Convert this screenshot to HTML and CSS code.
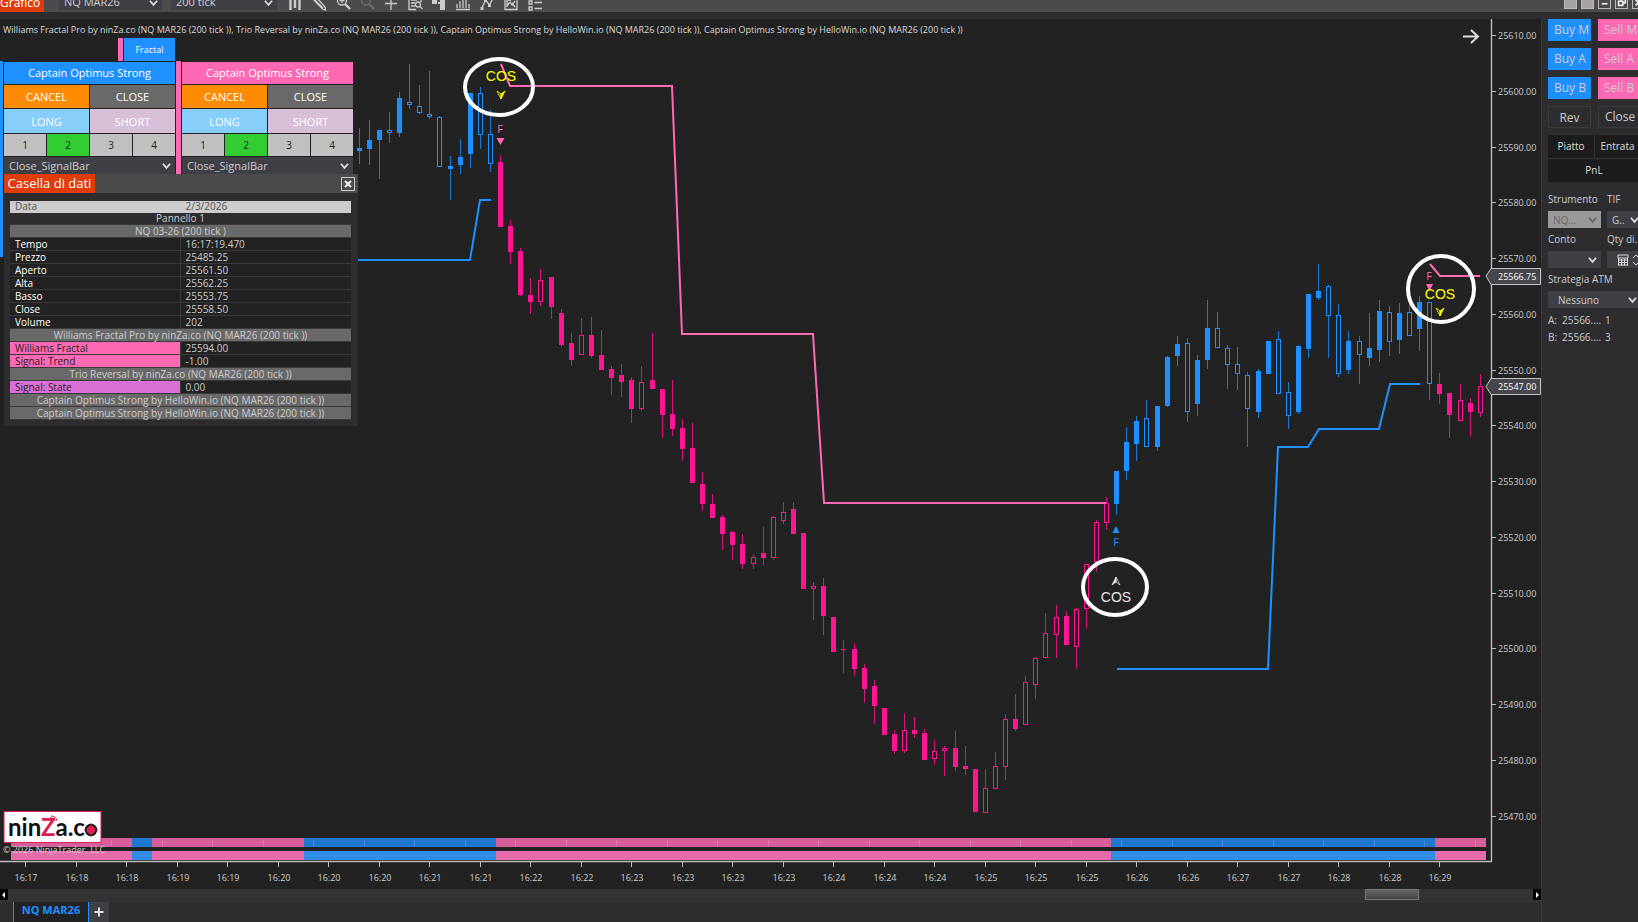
FILE: index.html
```html
<!DOCTYPE html>
<html lang="it">
<head>
  <meta charset="UTF-8">
  <meta name="viewport" content="width=device-width, initial-scale=1.0">
  <title>Grafico - NQ MAR26</title>
  <link rel="stylesheet" href="styles.css">
</head>
<body>

<header class="toolbar">
  <div class="toolbar-title">Grafico</div>
  <div class="select-box tool-instrument">
    <select aria-label="Strumento del grafico"><option>NQ MAR26</option></select>
    <svg class="chevron" viewBox="0 0 10 8"><path d="M1 1.500L5 6L9 1.500"/></svg>
  </div>
  <div class="select-box tool-interval">
    <select aria-label="Intervallo"><option>200 tick</option></select>
    <svg class="chevron" viewBox="0 0 10 8"><path d="M1 1.500L5 6L9 1.500"/></svg>
  </div>
  <div class="tool-icons">
    <button aria-label="Stile barre"><svg viewBox="0 0 16 16"><path class="thick" d="M3.500 0V15M8 0V13M12.500 0V15"/></svg></button>
    <button aria-label="Disegna"><svg viewBox="0 0 16 16"><path d="M2 4L5 2L14 12L14.500 15L11.500 14ZM4 5L12 13"/></svg></button>
    <button aria-label="Zoom avanti"><svg viewBox="0 0 16 16"><circle cx="7" cy="5.500" r="4.500"/><path d="M4.500 5.500H9.500M7 3V8"/><path class="thick" d="M10 9L15 14"/></svg></button>
    <button aria-label="Zoom indietro" disabled><svg viewBox="0 0 16 16"><circle cx="7" cy="5.500" r="4.500"/><path class="thick" d="M10 9L15 14"/></svg></button>
    <button aria-label="Cursore"><svg viewBox="0 0 16 16"><path d="M8 2V15M2 8.500H14"/></svg></button>
    <button aria-label="Casella di dati"><svg viewBox="0 0 16 16"><path d="M9 14.500H2V1H14V7M4 5H10M4 8H8M4 11H8"/><circle cx="11" cy="9.500" r="2.500"/><path d="M13 11.500L15.500 14"/></svg></button>
    <button aria-label="Chart Trader"><svg viewBox="0 0 16 16"><path class="solid" d="M9 0H14V15H9V9H7V7H9ZM1 5H6V9H1Z"/></svg></button>
    <button aria-label="Serie di dati"><svg viewBox="0 0 16 16"><path d="M2 9V13M5 6V13M8 2V13M11 5V13M14 9V13M1 14.500H15"/></svg></button>
    <button aria-label="Indicatori"><svg viewBox="0 0 16 16"><path d="M3 13L6.500 5L10.500 10L14 3"/><path class="solid" d="M1.500 12H4.500V15H1.500ZM9 9H12V12H9ZM5 4H8V7H5Z"/></svg></button>
    <button aria-label="Strategie"><svg viewBox="0 0 16 16"><path d="M2 0V14.500H14V0M4 11L7 7L9 10L12 6M4 12V5H8M9 8L12 12"/></svg></button>
    <button aria-label="Proprietà"><svg viewBox="0 0 16 16"><path d="M2 6H5V9H2ZM2 12H5V15H2ZM7.500 7.500H15M7.500 13.500H15"/></svg></button>
  </div>
  <div class="window-buttons">
    <span class="link-box"></span>
    <span class="link-box"></span>
    <button aria-label="Riduci"><svg viewBox="0 0 13 13"><path d="M3 8H10"/></svg></button>
    <button aria-label="Ripristina"><svg viewBox="0 0 13 13"><path d="M3 5H8V10H3ZM6 5V2H11V7H8"/></svg></button>
    <button aria-label="Chiudi"><svg viewBox="0 0 13 13"><path d="M3 3L10 10M10 3L3 10"/></svg></button>
  </div>
</header>

<main class="workspace">
  <section class="chart-column">
    <div class="chart">
      <svg id="chart" class="chart-svg" viewBox="0 19 1541 870" preserveAspectRatio="xMinYMin meet">
        <text class="legend" x="3" y="33">Williams Fractal Pro by ninZa.co (NQ MAR26 (200 tick )), Trio Reversal by ninZa.co (NQ MAR26 (200 tick )), Captain Optimus Strong by HelloWin.io (NQ MAR26 (200 tick )), Captain Optimus Strong by HelloWin.io (NQ MAR26 (200 tick ))</text>

        <g id="bands"></g>
        <g id="candles"></g>

        <!-- trailing stop lines -->
        <polyline class="stop blue" points="340,260 470,260 480,200 491,200"/>
        <polyline class="stop pink" points="501,64 510,86 672,86 682,334 813,334 824,503 1106,503"/>
        <polyline class="stop blue" points="1117,669 1268,669 1278,447 1308,447 1319,429 1379,429 1390,384 1420,384"/>
        <polyline class="stop pink" points="1430,264 1440,276 1480,276"/>

        <!-- fractal and COS signals -->
        <g class="pink-mark">
          <text x="500" y="133">F</text>
          <path d="M496.500 138H504.500L500.500 145Z"/>
          <text x="1429" y="280">F</text>
          <path d="M1426 284H1433L1429.500 291Z"/>
        </g>
        <g class="blue-mark">
          <path d="M1112.500 533H1119.500L1116 526Z"/>
          <text x="1116" y="546">F</text>
        </g>
        <g class="cos yellow">
          <text x="501" y="81">COS</text>
          <path d="M497 91L501 94V99Z"/>
          <path class="half" d="M505 91L501 94V99Z"/>
          <text x="1440" y="299">COS</text>
          <path d="M1436 308L1440 311V316Z"/>
          <path class="half" d="M1444 308L1440 311V316Z"/>
        </g>
        <g class="cos white">
          <path class="half" d="M1112 585L1116 582V577Z"/>
          <path d="M1120 585L1116 582V577Z"/>
          <text x="1116" y="602">COS</text>
        </g>
        <ellipse class="ring" cx="499" cy="87" rx="34" ry="28"/>
        <ellipse class="ring" cx="1115" cy="587" rx="32" ry="28"/>
        <ellipse class="ring" cx="1441" cy="289" rx="33" ry="33"/>

        <path class="goto" d="M1463 36.500H1478M1471 30L1478 36.500L1471 43"/>

        <path class="axis" d="M1491.500 19V861.500M0 861.500H1492"/>
        <g id="price-axis"></g>
        <g id="time-axis"></g>

        <path class="price-tag" d="M1486 276L1491 268.500H1540.500V284.500H1491Z"/>
        <text class="tag-text" x="1498" y="280">25566.75</text>
        <path class="price-tag" d="M1486 386.500L1491 378.500H1540.500V394.500H1491Z"/>
        <text class="tag-text" x="1498" y="390">25547.00</text>

        <!-- logo -->
        <rect class="logo-box" x="4" y="811.500" width="97" height="31"/>
        <text class="logo-text" x="8" y="836">nin<tspan class="logo-z">Z</tspan>a.c</text>
        <circle class="logo-ring" cx="91" cy="830" r="5"/>
        <circle class="logo-dot" cx="91" cy="830" r="4"/>
        <path class="logo-cross" d="M84 830H98M91 823V837"/>
        <path class="logo-wave" d="M50 818A4 4 0 0 1 55 821M51 816A6 6 0 0 1 57 821"/>
        <text class="copyright" x="3" y="853">© 2026 NinjaTrader, LLC</text>
      </svg>

      <div class="overlay">
        <div class="fractal-row">
          <span class="drag pink-bg"></span>
          <button class="fractal">Fractal</button>
        </div>
        <div class="cos-panels">
          <span class="drag blue-bg side-stripe"></span>
          <div class="cos-panel">
            <div class="cos-title blue-bg">Captain Optimus Strong</div>
            <div class="cos-row first">
              <button class="orange">CANCEL</button><button class="gray">CLOSE</button>
            </div>
            <div class="cos-row">
              <button class="long">LONG</button><button class="short">SHORT</button>
            </div>
            <div class="cos-row numbers">
              <button>1</button><button class="on">2</button><button>3</button><button>4</button>
            </div>
            <div class="select-box">
              <select aria-label="Uscita"><option>Close_SignalBar</option></select>
              <svg class="chevron" viewBox="0 0 10 8"><path d="M1 1.500L5 6L9 1.500"/></svg>
            </div>
          </div>
          <span class="drag pink-bg"></span>
          <div class="cos-panel">
            <div class="cos-title pink-bg">Captain Optimus Strong</div>
            <div class="cos-row first">
              <button class="orange">CANCEL</button><button class="gray">CLOSE</button>
            </div>
            <div class="cos-row">
              <button class="long">LONG</button><button class="short">SHORT</button>
            </div>
            <div class="cos-row numbers">
              <button>1</button><button class="on">2</button><button>3</button><button>4</button>
            </div>
            <div class="select-box">
              <select aria-label="Uscita"><option>Close_SignalBar</option></select>
              <svg class="chevron" viewBox="0 0 10 8"><path d="M1 1.500L5 6L9 1.500"/></svg>
            </div>
          </div>
        </div>

        <div class="data-box">
          <div class="data-head">
            <h2>Casella di dati</h2>
            <button aria-label="Chiudi"><svg viewBox="0 0 12 12"><path d="M3 3L9 9M9 3L3 9"/></svg></button>
          </div>
          <table>
            <tr class="date"><th>Data</th><td>2/3/2026</td></tr>
            <tr class="pane"><td colspan="2">Pannello 1</td></tr>
            <tr class="group"><td colspan="2">NQ 03-26 (200 tick )</td></tr>
            <tr><th>Tempo</th><td>16:17:19.470</td></tr>
            <tr><th>Prezzo</th><td>25485.25</td></tr>
            <tr><th>Aperto</th><td>25561.50</td></tr>
            <tr><th>Alta</th><td>25562.25</td></tr>
            <tr><th>Basso</th><td>25553.75</td></tr>
            <tr><th>Close</th><td>25558.50</td></tr>
            <tr><th>Volume</th><td>202</td></tr>
            <tr class="group"><td colspan="2">Williams Fractal Pro by ninZa.co (NQ MAR26 (200 tick ))</td></tr>
            <tr class="hot"><th>Williams Fractal</th><td>25594.00</td></tr>
            <tr class="hot"><th>Signal: Trend</th><td>-1.00</td></tr>
            <tr class="group"><td colspan="2">Trio Reversal by ninZa.co (NQ MAR26 (200 tick ))</td></tr>
            <tr class="orchid"><th>Signal: State</th><td>0.00</td></tr>
            <tr class="group"><td colspan="2">Captain Optimus Strong by HelloWin.io (NQ MAR26 (200 tick ))</td></tr>
            <tr class="group"><td colspan="2">Captain Optimus Strong by HelloWin.io (NQ MAR26 (200 tick ))</td></tr>
          </table>
        </div>
      </div>
    </div>

    <div class="scrollbar">
      <button aria-label="Scorri a sinistra"><svg viewBox="0 0 8 12"><path d="M5 3V9L2 6Z"/></svg></button>
      <div class="track"><div class="thumb"></div></div>
      <button aria-label="Scorri a destra"><svg viewBox="0 0 8 12"><path d="M3 3V9L6 6Z"/></svg></button>
    </div>
    <nav class="tabs">
      <a class="tab" href="#chart">NQ MAR26</a>
      <button class="add-tab" aria-label="Nuova scheda"><svg viewBox="0 0 12 12"><path d="M6 1.500V10.500M1.500 6H10.500"/></svg></button>
    </nav>
  </section>

  <aside class="trader">
    <div class="orders">
      <button class="buy"><span>Buy M</span></button><button class="sell"><span>Sell M</span></button>
      <button class="buy"><span>Buy A</span></button><button class="sell"><span>Sell A</span></button>
      <button class="buy"><span>Buy B</span></button><button class="sell"><span>Sell B</span></button>
      <button class="plain center">Rev</button><button class="plain"><span>Close</span></button>
    </div>
    <div class="position">
      <div>Piatto</div><div>Entrata</div>
      <div class="pnl">PnL</div>
    </div>
    <div class="fields">
      <div class="field">
        <label for="strumento">Strumento</label>
        <div class="select-box disabled">
          <select id="strumento" disabled><option>NQ...</option></select>
          <svg class="chevron" viewBox="0 0 10 8"><path d="M1 1.500L5 6L9 1.500"/></svg>
        </div>
      </div>
      <div class="field">
        <label for="tif">TIF</label>
        <div class="select-box short-box">
          <select id="tif"><option>G..</option></select>
          <svg class="chevron" viewBox="0 0 10 8"><path d="M1 1.500L5 6L9 1.500"/></svg>
        </div>
      </div>
      <div class="field">
        <label for="conto">Conto</label>
        <div class="select-box">
          <select id="conto"><option></option></select>
          <svg class="chevron" viewBox="0 0 10 8"><path d="M1 1.500L5 6L9 1.500"/></svg>
        </div>
      </div>
      <div class="field">
        <label for="qty">Qty di..</label>
        <div class="qty-box">
          <input id="qty" type="text">
          <svg class="calc" viewBox="0 0 12 12"><path d="M1 1H11V4H1ZM1 6H11M1 8.500H11M1 11H11M1.500 4V11.500M4.500 5V11.500M7.500 5V11.500M10.500 4V11.500"/></svg>
          <svg class="spin" viewBox="0 0 8 12"><path d="M1 4L4 1L7 4M1 8L4 11L7 8"/></svg>
        </div>
      </div>
      <div class="field wide">
        <label for="atm">Strategia ATM</label>
        <div class="select-box">
          <select id="atm"><option>Nessuno</option></select>
          <svg class="chevron" viewBox="0 0 10 8"><path d="M1 1.500L5 6L9 1.500"/></svg>
        </div>
      </div>
    </div>
    <div class="quotes">
      <span>A:</span><span>25566....</span><span>1</span>
      <span>B:</span><span>25566....</span><span>3</span>
    </div>
  </aside>
</main>

<script src="chart.js"></script>
</body>
</html>
```
FILE: styles.css
```css
* {
  margin: 0;
  padding: 0;
  box-sizing: border-box;
}
body {
  display: flex;
  flex-direction: column;
  height: 100vh;
  overflow: hidden;
  background: #2d2d30;
  color: #ccc;
  font-family: "Open Sans", "Noto Sans", sans-serif;
  font-size: 11px;
}
button, select, input {
  font: inherit;
  color: inherit;
  border: none;
  border-radius: 0;
  background: none;
}
svg {
  display: block;
}
.blue-bg {
  background: #1e90ff;
}
.pink-bg {
  background: #ff69b4;
}

/* select with its own arrow */
.select-box {
  position: relative;
  background: #3f3f46;
}
.select-box select {
  display: block;
  width: 100%;
  height: 100%;
  padding: 0 5px;
  appearance: none;
  opacity: 1;
}
.select-box option {
  background: #3f3f46;
}
.chevron {
  position: absolute;
  right: 4px;
  top: 50%;
  width: 9px;
  height: 8px;
  margin-top: -4px;
  pointer-events: none;
}
.chevron path {
  fill: none;
  stroke: #ddd;
  stroke-width: 2;
}

/* toolbar */
.toolbar {
  display: flex;
  align-items: flex-end;
  height: 19px;
  flex: none;
  overflow: hidden;
  background: #4b4b4b;
  border-bottom: 7px solid #2d2d30;
}
.toolbar-title {
  width: 44px;
  height: 24px;
  flex: none;
  background: #e03c0a;
  color: #fff;
  font-size: 12px;
  line-height: 30px;
  white-space: nowrap;
}
.toolbar .select-box {
  height: 22px;
  margin-bottom: 2px;
}
.tool-instrument {
  width: 103px;
  margin-left: 15px;
}
.tool-interval {
  width: 106px;
  margin-left: 9px;
}
.toolbar .chevron {
  margin-top: 0;
}
.toolbar .select-box select {
  padding-top: 4px;
}
.tool-icons {
  display: flex;
  gap: 8px;
  margin-left: 10px;
  padding-bottom: 1px;
}
.tool-icons svg {
  width: 16px;
  height: 16px;
}
.tool-icons path, .tool-icons circle {
  fill: none;
  stroke: #ccc;
  stroke-width: 1.3;
}
.tool-icons .thick {
  stroke-width: 2.4;
}
.tool-icons .solid {
  fill: #ccc;
  stroke: none;
}
.tool-icons button:disabled {
  opacity: 0.25;
}
.window-buttons {
  display: flex;
  gap: 4px;
  margin-left: auto;
  margin-right: -7px;
  padding-bottom: 3px;
}
.window-buttons button, .link-box {
  width: 13px;
  height: 13px;
  border: 1px solid #bbb;
}
.link-box {
  background: #a8a4a4;
}
.window-buttons path {
  fill: none;
  stroke: #eee;
  stroke-width: 2;
}

/* layout */
.workspace {
  display: flex;
  flex: 1;
  min-height: 0;
}
.chart-column {
  display: flex;
  flex-direction: column;
  flex: 1;
  min-width: 0;
}
.chart {
  position: relative;
  flex: 1;
  min-height: 0;
  background: #222;
}
.chart-svg {
  width: 100%;
  height: 100%;
}

/* chart */
.chart-svg text {
  fill: #ccc;
  font-size: 9px;
}
.chart-svg .legend {
  fill: #d8d8d8;
}
.stop {
  fill: none;
  stroke-width: 2;
}
.stop.blue {
  stroke: #1e90ff;
}
.stop.pink {
  stroke: #ff69b4;
}
.up {
  stroke: #1e90ff;
  fill: #1e90ff;
}
.down {
  stroke: #ff1493;
  fill: #ff1493;
}
.up .wick, .down .wick {
  stroke-opacity: 0.8;
}
.hollow {
  fill: #222;
}
.ring {
  fill: none;
  stroke: #fff;
  stroke-width: 4;
}
.chart-svg .pink-mark, .chart-svg .pink-mark text {
  fill: #ff69b4;
}
.chart-svg .blue-mark, .chart-svg .blue-mark text {
  fill: #1e90ff;
}
.chart-svg .pink-mark text, .chart-svg .blue-mark text {
  font-size: 11px;
  text-anchor: middle;
}
.chart-svg .cos text {
  font-family: "Liberation Sans", Arial, sans-serif;
  font-size: 14px;
  text-anchor: middle;
}
.cos.yellow {
  fill: none;
  stroke: #ff0;
  stroke-width: 0.8;
}
.cos.white {
  fill: none;
  stroke: #ddd;
  stroke-width: 0.8;
}
.cos text {
  stroke: none;
}
.chart-svg .yellow text, .yellow .half {
  fill: #ff0;
}
.chart-svg .white text, .white .half {
  fill: #e8e8e8;
}
.goto {
  fill: none;
  stroke: #ddd;
  stroke-width: 2;
}
.axis {
  fill: none;
  stroke: #bbb;
  stroke-width: 1.4;
}
.tick {
  stroke: #bbb;
}
.time-label {
  text-anchor: middle;
}
.price-tag {
  fill: #46464c;
  stroke: #c4c4c4;
}
.chart-svg .tag-text {
  fill: #fff;
}
.logo-box {
  fill: #fff;
  stroke: #dc1e50;
}
.chart-svg .logo-text {
  font-family: Lato, sans-serif;
  font-weight: 700;
  font-size: 24px;
  fill: #111;
}
.logo-text .logo-z {
  fill: #dc1e50;
}
.logo-ring {
  fill: none;
  stroke: #111;
  stroke-width: 2.4;
}
.logo-dot {
  fill: #dc1e50;
}
.logo-cross, .logo-wave {
  fill: none;
  stroke: #dc1e50;
}

/* panels over the chart */
.overlay {
  position: absolute;
  top: 19px;
  left: 0;
  width: 358px;
}
.drag {
  width: 5px;
  flex: none;
}
.fractal-row {
  display: flex;
  gap: 1px;
  height: 23px;
  margin-left: 118px;
}
.fractal {
  width: 51px;
  background: #1e90ff;
  color: #fff;
  font-size: 9px;
}
.cos-panels {
  display: flex;
  gap: 1px;
}
.side-stripe {
  width: 3px;
  height: 196px;
  margin-bottom: -85px;
}
.cos-panel {
  display: flex;
  flex-direction: column;
  gap: 1px;
  width: 171px;
  padding-top: 1px;
  background: #222;
}
.cos-title {
  height: 22px;
  color: #fff;
  font-size: 11px;
  line-height: 21px;
  text-align: center;
}
.cos-row {
  display: grid;
  grid-template-columns: 1fr 1fr;
  gap: 1px;
  height: 24px;
}
.cos-row.first {
  height: 23px;
}
.cos-row button {
  color: #fff;
}
.cos-row .orange {
  background: #ff8c00;
}
.cos-row .gray {
  background: #696969;
}
.cos-row .long {
  background: #87cefa;
}
.cos-row .short {
  background: #d8bfd8;
}
.cos-row.numbers {
  grid-template-columns: repeat(4, 1fr);
  height: 22px;
}
.cos-row.numbers button {
  background: #c0c0c0;
  color: #222;
  font-size: 10px;
}
.cos-row.numbers .on {
  background: #32cd32;
}
.cos-panel .select-box {
  height: 17px;
}

.data-box {
  position: relative;
  margin-left: 4px;
  height: 252px;
  background: #2d2d30;
}
.data-head {
  display: flex;
  justify-content: space-between;
  align-items: center;
  height: 19px;
  padding-right: 3px;
  background: #4b4b4b;
}
.data-head h2 {
  width: 91px;
  background: #e03c0a;
  color: #fff;
  font-size: 13px;
  font-weight: 400;
  line-height: 19px;
  text-align: center;
  white-space: nowrap;
}
.data-head button {
  width: 14px;
  height: 14px;
  border: 1px solid #ccc;
}
.data-head path {
  stroke: #eee;
  stroke-width: 2;
}
.data-box table {
  width: 341px;
  margin: 8px 6px 0;
  border-collapse: collapse;
  table-layout: fixed;
  font-size: 10px;
  line-height: 12px;
}
.data-box th, .data-box td {
  padding: 0 5px;
  border-bottom: 1px solid #3a3a3a;
  background: #222;
  font-weight: 400;
  text-align: left;
  white-space: nowrap;
}
.data-box th {
  width: 170px;
  border-right: 1px solid #3a3a3a;
  color: #fff;
}
.data-box .date th, .data-box .date td {
  background: #ccc;
  border-color: #ccc;
  color: #555;
}
.data-box .date, .data-box .pane {
  line-height: 11px;
}
.data-box .pane td {
  background: #2d2d30;
  text-align: center;
}
.data-box .group td {
  background: #696969;
  text-align: center;
}
.data-box .hot th {
  background: #ff69b4;
  color: #222;
}
.data-box .orchid th {
  background: #da70d6;
  color: #222;
}

/* scrollbar and tabs */
.scrollbar {
  display: flex;
  flex: none;
  height: 13px;
  padding-bottom: 2px;
  background: #333;
}
.scrollbar button {
  width: 8px;
  background: #000;
}
.scrollbar path {
  fill: #fff;
}
.track {
  flex: 1;
}
.thumb {
  width: 54px;
  height: 11px;
  margin-left: 89%;
  border: 1px solid #777;
  background: linear-gradient(#666, #444);
}
.tabs {
  display: flex;
  flex: none;
  height: 20px;
  padding-left: 13px;
}
.tab {
  width: 76px;
  border-left: 1px solid #1e90ff;
  border-right: 1px solid #1e90ff;
  background: #222;
  color: #1e90ff;
  font-weight: 700;
  line-height: 15px;
  text-align: center;
  text-decoration: none;
}
.add-tab {
  width: 20px;
  padding: 0 4px;
  background: #3f3f46;
}
.add-tab path {
  stroke: #ddd;
  stroke-width: 2;
}

/* chart trader */
.trader {
  width: 97px;
  flex: none;
  padding-left: 6px;
  border-left: 1px solid #3a3a3a;
  overflow: hidden;
}
.orders {
  display: grid;
  grid-template-columns: 43px 60px;
  grid-auto-rows: 22px;
  gap: 7px;
}
.orders button {
  padding: 0 0 2px 6px;
  font-size: 12px;
  text-align: left;
}
.orders span {
  display: block;
  white-space: nowrap;
}
.orders .buy {
  background: #1e90ff;
}
.orders .sell {
  background: #ff69b4;
}
.orders .plain {
  border: 1px solid #3a3a3e;
}
.orders .center {
  padding: 0;
  text-align: center;
}
.position {
  display: grid;
  grid-template-columns: 46px 57px;
  grid-auto-rows: 23px;
  gap: 1px;
  width: 104px;
  margin-top: 7px;
  background: #333;
}
.position div {
  background: #1c1c1c;
  color: #ddd;
  font-size: 10px;
  line-height: 22px;
  text-align: center;
  padding-right: 12px;
}
.position div:first-child {
  padding-right: 0;
}
.position .pnl {
  grid-column: 1 / 3;
}
.fields {
  display: grid;
  grid-template-columns: 53px 45px;
  column-gap: 6px;
  row-gap: 3px;
  margin-top: 9px;
  font-size: 10px;
}
.field label {
  display: block;
  height: 20px;
  line-height: 16px;
  white-space: nowrap;
}
.field .select-box, .qty-box {
  height: 17px;
}
.field .select-box.disabled {
  background: #999;
  color: #666;
}
.disabled .chevron path {
  stroke: #666;
}
.field .short-box {
  width: 36px;
}
.field.wide {
  grid-column: 1 / 3;
}
.field.wide .select-box {
  width: 93px;
}
.field.wide select {
  padding-left: 10px;
}
.qty-box {
  display: flex;
  align-items: center;
  background: #3f3f46;
}
.qty-box input {
  width: 10px;
}
.qty-box svg {
  height: 12px;
}
.qty-box path {
  fill: none;
  stroke: #ddd;
}
.calc {
  width: 12px;
}
.spin {
  width: 8px;
  margin-left: 3px;
}
.quotes {
  display: grid;
  grid-template-columns: 14px 43px 12px;
  grid-auto-rows: 17px;
  margin-top: 4px;
  font-size: 10px;
  line-height: 17px;
}
```
FILE: chart.js
```js
const NS = "http://www.w3.org/2000/svg";
const FIRST_X = 358.6;
const STEP = 10.1;

// high, low, body top, body bottom, filled
const bars = [
  [128,164,148,151,1],[120,165,140,149,1],[130,179,130,140,1],[112,143,130,133,0],[92,137,98,133,1],
  [64,109,102,105,0],[85,114,106,113,0],[71,119,114,117,0],[116,167,117,167,0],[156,200,166,169,1],
  [139,174,157,165,1],[93,168,93,154,1],[87,149,93,135,0],[110,172,134,164,0],[155,227,162,227,1],
  [220,264,226,252,1],[248,296,251,295,1],[278,314,295,302,1],[269,306,280,302,0],[277,319,277,307,1],
  [309,347,313,345,1],[333,366,343,360,1],[318,355,335,355,0],[317,358,335,356,1],[330,370,355,370,1],
  [366,395,369,378,1],[364,397,375,382,1],[377,423,380,409,1],[366,411,382,409,0],[333,389,380,389,1],
  [389,438,389,415,1],[380,436,414,429,1],[419,461,428,449,1],[423,483,448,483,1],[472,511,484,504,1],
  [494,518,504,518,1],[515,550,517,534,1],[531,560,532,545,1],[534,569,544,564,1],[554,569,557,564,0],
  [527,565,553,558,1],[516,560,517,558,0],[502,524,512,521,0],[502,534,509,534,1],[533,589,533,589,1],
  [582,620,586,589,0],[578,635,586,616,1],[617,652,617,652,1],[640,673,649,650,1],[643,676,649,669,1],
  [664,703,668,689,1],[680,724,686,706,1],[708,735,708,735,1],[730,754,734,751,1],[713,753,730,751,0],
  [717,738,730,734,1],[729,760,733,760,1],[740,765,751,759,0],[746,776,748,751,0],[731,771,748,767,1],
  [746,775,766,769,1],[769,812,769,812,1],[769,813,788,813,0],[752,789,766,789,0],[714,780,719,767,0],
  [694,731,719,729,1],[676,725,682,725,0],[657,699,658,685,0],[613,658,633,658,0],[605,658,617,635,0],
  [611,645,616,645,1],[608,669,609,647,0],[564,629,564,609,0],[520,572,522,562,0],[497,530,503,523,0],
  [471,515,471,504,1],[427,480,442,471,1],[416,461,421,444,1],[400,447,418,447,0],[406,451,406,447,1],
  [356,407,357,406,1],[336,366,344,356,1],[338,422,343,412,0],[355,416,360,404,1],[300,369,328,360,1],
  [312,348,328,348,0],[345,389,348,365,0],[347,390,364,374,0],[372,447,375,409,0],[369,418,371,412,1],
  [341,374,341,374,1],[331,394,339,394,0],[382,429,392,416,0],[345,414,346,412,1],[294,358,294,349,1],
  [264,300,291,298,1],[285,358,286,316,0],[304,377,315,374,0],[331,374,341,370,1],[336,384,341,355,0],
  [313,366,348,358,1],[300,362,311,350,1],[306,356,312,342,0],[303,354,313,340,1],[301,336,312,336,0],
  [296,351,302,329,1],[302,400,302,384,0],[373,404,384,394,1],[393,438,393,415,1],[384,421,400,421,0],
  [398,437,403,412,1],[374,417,386,413,0]
];

// trend segments of the two bands: from, to, direction
const trend = [
  [11,132,"d"],[132,152,"u"],[152,304,"d"],[304,496,"u"],[496,1111,"d"],[1111,1435,"u"],[1435,1486,"d"]
];
const bandColors = {
  top: { u: "#1f77d0", d: "#d65f9b" },
  bottom: { u: "#318ce7", d: "#e56bab" }
};

const times = "17 18 18 19 19 20 20 20 21 21 22 22 23 23 23 23 24 24 24 25 25 25 26 26 27 27 28 28 29".split(" ");

function add(parent, name, attrs, text) {
  const el = document.createElementNS(NS, name);
  for (const key in attrs) el.setAttribute(key, attrs[key]);
  if (text) el.textContent = text;
  parent.appendChild(el);
  return el;
}

function drawBars() {
  const root = document.getElementById("candles");
  bars.forEach(([high, low, top, bottom, filled], i) => {
    const x = Math.round(FIRST_X + i * STEP);
    const down = (i >= 14 && i < 75) || i > 106;
    const g = add(root, "g", { class: down ? "down" : "up" });
    add(g, "path", { class: "wick", d: `M${x + 0.5} ${high}V${low}` });
    add(g, "rect", {
      class: filled ? "body" : "hollow",
      x: x - 1.5, y: top + 0.5, width: 4, height: Math.max(bottom - top - 1, 0.1)
    });
  });
}

function drawBands() {
  const root = document.getElementById("bands");
  trend.forEach(([from, to, dir]) => {
    add(root, "rect", { x: from, y: 838, width: to - from, height: 9, fill: bandColors.top[dir] });
    add(root, "rect", { x: from, y: 851, width: to - from, height: 9, fill: bandColors.bottom[dir] });
  });
  for (let x = 111; x < 1480; x += 50.5) {
    add(root, "rect", { x: Math.round(x), y: 840, width: 1, height: 7, fill: "#fff", opacity: 0.15 });
  }
}

function drawAxes() {
  const prices = document.getElementById("price-axis");
  for (let i = 0; i < 15; i++) {
    const price = 25610 - i * 10;
    const y = Math.round(35 + i * 55.75);
    add(prices, "path", { class: "tick", d: `M1492 ${y + 0.5}H1496` });
    add(prices, "text", { x: 1498, y: y + 4 }, price.toFixed(2));
  }
  const root = document.getElementById("time-axis");
  times.forEach((t, i) => {
    const x = Math.round(25 + i * 50.5);
    add(root, "path", { class: "tick", d: `M${x + 0.5} 862V867` });
    add(root, "text", { class: "time-label", x: x + 1, y: 881 }, "16:" + t);
  });
}

drawBands();
drawBars();
drawAxes();
```
